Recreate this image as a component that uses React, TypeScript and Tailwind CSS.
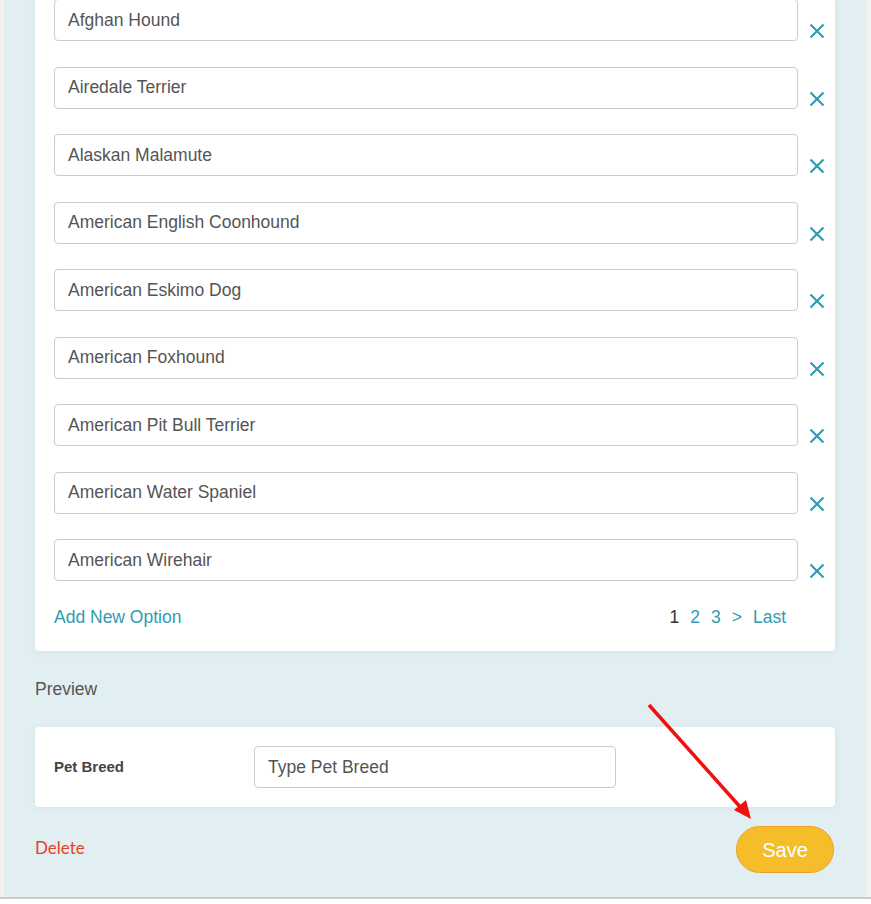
import React from "react";

const BREEDS = [
  "Afghan Hound",
  "Airedale Terrier",
  "Alaskan Malamute",
  "American English Coonhound",
  "American Eskimo Dog",
  "American Foxhound",
  "American Pit Bull Terrier",
  "American Water Spaniel",
  "American Wirehair",
];

function CloseIcon() {
  return (
    <svg width="16" height="16" viewBox="0 0 16 16" className="shrink-0">
      <path d="M1.5 1.5 L14.5 14.5 M14.5 1.5 L1.5 14.5" stroke="#2f9bb2" strokeWidth="2.2" strokeLinecap="butt" />
    </svg>
  );
}

function OptionRow({ value }: { value: string }) {
  return (
    <div className="flex items-end">
      <div className="shrink-0 w-[744px] h-[42px] flex items-center px-[13px] border border-[#cccccc] rounded-[4px] bg-white text-[17.5px] text-[#555555]">
        {value}
      </div>
      <div className="ml-[11px] mb-[2px]">
        <CloseIcon />
      </div>
    </div>
  );
}

export default function App() {
  return (
    <div className="relative w-[871px] h-[904px] overflow-hidden bg-white font-['Liberation_Sans',Arial,sans-serif]">
      <div className="flex h-[897px]">
        <div className="w-[4px] bg-[#f2f2f2]" />
        <div className="w-[862px] bg-[#e1eff3] px-[31px] flex flex-col">
          {/* OPTIONS CARD */}
          <div className="-mt-[1px] bg-white rounded-b-[4px] shadow-[0_1px_6px_rgba(0,0,0,0.06)] pl-[19px] pb-[22px]">
            <div className="flex flex-col gap-[25.5px]">
              {BREEDS.map((b) => (
                <OptionRow key={b} value={b} />
              ))}
            </div>
            <div className="mt-[24px] h-[24px] flex items-center justify-between pr-[49px] text-[17.5px]">
              <span className="text-[#2f9bb2]">Add New Option</span>
              <div className="flex items-center gap-[11px]">
                <span className="text-[#333333]">1</span>
                <span className="text-[#2f9bb2]">2</span>
                <span className="text-[#2f9bb2]">3</span>
                <span className="text-[#2f9bb2]">&gt;</span>
                <span className="text-[#2f9bb2]">Last</span>
              </div>
            </div>
          </div>

          {/* PREVIEW */}
          <div className="mt-[26px] h-[24px] flex items-center text-[17.5px] text-[#555555]">Preview</div>
          <div className="mt-[26px] h-[80px] bg-white rounded-[4px] shadow-[0_1px_6px_rgba(0,0,0,0.06)] flex items-center px-[19px]">
            <span className="w-[200px] text-[15px] font-bold text-[#444444]">Pet Breed</span>
            <div className="w-[362px] h-[42px] flex items-center px-[13px] border border-[#cccccc] rounded-[4px] text-[17.5px] text-[#555555]">
              Type Pet Breed
            </div>
          </div>

          {/* FOOTER */}
          <div className="mt-[19px] flex items-center justify-between">
            <span className="-mt-[3px] text-[17px] text-[#e8401c] font-['Lato',sans-serif]">Delete</span>
            <button className="w-[98px] h-[47px] rounded-full bg-[#f6bd2b] border border-[#ee9f24] text-white text-[20px] mr-[1px]">
              Save
            </button>
          </div>
        </div>
        <div className="w-[5px] bg-[#f2f2f2]" />
      </div>
      <div className="h-[2px] bg-[#cccccc]" />

      {/* annotation arrow */}
      <svg className="absolute left-0 top-0 pointer-events-none" width="871" height="904">
        <line x1="649" y1="705" x2="742" y2="809" stroke="#f01010" strokeWidth="3.5" />
        <polygon points="751,819 734,810 746,800" fill="#f01010" />
      </svg>
    </div>
  );
}
